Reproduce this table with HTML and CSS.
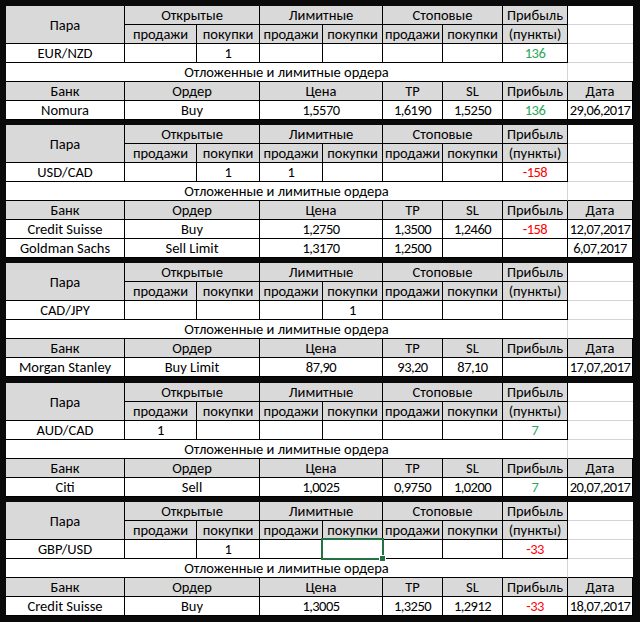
FILE: index.html
```html
<!DOCTYPE html>
<html lang="ru">
<head>
<meta charset="utf-8">
<title>Ордера</title>
<link rel="stylesheet" href="styles.css">
</head>
<body>
<div class="sheet">

  <section class="block">
    <div class="c h r2">Пара</div>
    <div class="c h s2">Открытые</div>
    <div class="c h s2">Лимитные</div>
    <div class="c h s2">Стоповые</div>
    <div class="c h">Прибыль</div>
    <div class="c g"></div>
    <div class="c h">продажи</div><div class="c h">покупки</div>
    <div class="c h">продажи</div><div class="c h">покупки</div>
    <div class="c h">продажи</div><div class="c h">покупки</div>
    <div class="c h">(пункты)</div>
    <div class="c g"></div>
    <div class="c">EUR/NZD</div><div class="c"></div><div class="c n">1</div><div class="c"></div><div class="c"></div><div class="c"></div><div class="c"></div><div class="c n pos">136</div>
    <div class="c g"></div>
    <div class="c cap">Отложенные и лимитные ордера</div>
    <div class="c g gk"></div>
    <div class="c h">Банк</div><div class="c h s2">Ордер</div><div class="c h s2">Цена</div><div class="c h">TP</div><div class="c h">SL</div><div class="c h">Прибыль</div><div class="c h">Дата</div>
    <div class="c">Nomura</div><div class="c s2">Buy</div><div class="c n s2">1,5570</div><div class="c n">1,6190</div><div class="c n">1,5250</div><div class="c n pos">136</div><div class="c n">29,06,2017</div>
  </section>

  <section class="block">
    <div class="c h r2">Пара</div>
    <div class="c h s2">Открытые</div>
    <div class="c h s2">Лимитные</div>
    <div class="c h s2">Стоповые</div>
    <div class="c h">Прибыль</div>
    <div class="c g"></div>
    <div class="c h">продажи</div><div class="c h">покупки</div>
    <div class="c h">продажи</div><div class="c h">покупки</div>
    <div class="c h">продажи</div><div class="c h">покупки</div>
    <div class="c h">(пункты)</div>
    <div class="c g"></div>
    <div class="c">USD/CAD</div><div class="c"></div><div class="c n">1</div><div class="c n">1</div><div class="c"></div><div class="c"></div><div class="c"></div><div class="c n neg">-158</div>
    <div class="c g"></div>
    <div class="c cap">Отложенные и лимитные ордера</div>
    <div class="c g gk"></div>
    <div class="c h">Банк</div><div class="c h s2">Ордер</div><div class="c h s2">Цена</div><div class="c h">TP</div><div class="c h">SL</div><div class="c h">Прибыль</div><div class="c h">Дата</div>
    <div class="c">Credit Suisse</div><div class="c s2">Buy</div><div class="c n s2">1,2750</div><div class="c n">1,3500</div><div class="c n">1,2460</div><div class="c n neg">-158</div><div class="c n">12,07,2017</div>
    <div class="c">Goldman Sachs</div><div class="c s2">Sell Limit</div><div class="c n s2">1,3170</div><div class="c n">1,2500</div><div class="c"></div><div class="c"></div><div class="c n">6,07,2017</div>
  </section>

  <section class="block">
    <div class="c h r2">Пара</div>
    <div class="c h s2">Открытые</div>
    <div class="c h s2">Лимитные</div>
    <div class="c h s2">Стоповые</div>
    <div class="c h">Прибыль</div>
    <div class="c g"></div>
    <div class="c h">продажи</div><div class="c h">покупки</div>
    <div class="c h">продажи</div><div class="c h">покупки</div>
    <div class="c h">продажи</div><div class="c h">покупки</div>
    <div class="c h">(пункты)</div>
    <div class="c g"></div>
    <div class="c">CAD/JPY</div><div class="c"></div><div class="c"></div><div class="c"></div><div class="c n">1</div><div class="c"></div><div class="c"></div><div class="c"></div>
    <div class="c g"></div>
    <div class="c cap">Отложенные и лимитные ордера</div>
    <div class="c g gk"></div>
    <div class="c h">Банк</div><div class="c h s2">Ордер</div><div class="c h s2">Цена</div><div class="c h">TP</div><div class="c h">SL</div><div class="c h">Прибыль</div><div class="c h">Дата</div>
    <div class="c">Morgan Stanley</div><div class="c s2">Buy Limit</div><div class="c n s2">87,90</div><div class="c n">93,20</div><div class="c n">87,10</div><div class="c"></div><div class="c n">17,07,2017</div>
  </section>

  <section class="block wide-gap">
    <div class="c h r2">Пара</div>
    <div class="c h s2">Открытые</div>
    <div class="c h s2">Лимитные</div>
    <div class="c h s2">Стоповые</div>
    <div class="c h">Прибыль</div>
    <div class="c g"></div>
    <div class="c h">продажи</div><div class="c h">покупки</div>
    <div class="c h">продажи</div><div class="c h">покупки</div>
    <div class="c h">продажи</div><div class="c h">покупки</div>
    <div class="c h">(пункты)</div>
    <div class="c g"></div>
    <div class="c">AUD/CAD</div><div class="c n">1</div><div class="c"></div><div class="c"></div><div class="c"></div><div class="c"></div><div class="c"></div><div class="c n pos">7</div>
    <div class="c g"></div>
    <div class="c cap">Отложенные и лимитные ордера</div>
    <div class="c g gk"></div>
    <div class="c h">Банк</div><div class="c h s2">Ордер</div><div class="c h s2">Цена</div><div class="c h">TP</div><div class="c h">SL</div><div class="c h">Прибыль</div><div class="c h">Дата</div>
    <div class="c">Citi</div><div class="c s2">Sell</div><div class="c n s2">1,0025</div><div class="c n">0,9750</div><div class="c n">1,0200</div><div class="c n pos">7</div><div class="c n">20,07,2017</div>
  </section>

  <section class="block">
    <div class="c h r2">Пара</div>
    <div class="c h s2">Открытые</div>
    <div class="c h s2">Лимитные</div>
    <div class="c h s2">Стоповые</div>
    <div class="c h">Прибыль</div>
    <div class="c g"></div>
    <div class="c h">продажи</div><div class="c h">покупки</div>
    <div class="c h">продажи</div><div class="c h">покупки</div>
    <div class="c h">продажи</div><div class="c h">покупки</div>
    <div class="c h">(пункты)</div>
    <div class="c g"></div>
    <div class="c">GBP/USD</div><div class="c"></div><div class="c n">1</div><div class="c"></div><div class="c selected"></div><div class="c"></div><div class="c"></div><div class="c n neg">-33</div>
    <div class="c g"></div>
    <div class="c cap">Отложенные и лимитные ордера</div>
    <div class="c g gk"></div>
    <div class="c h">Банк</div><div class="c h s2">Ордер</div><div class="c h s2">Цена</div><div class="c h">TP</div><div class="c h">SL</div><div class="c h">Прибыль</div><div class="c h">Дата</div>
    <div class="c">Credit Suisse</div><div class="c s2">Buy</div><div class="c n s2">1,3005</div><div class="c n">1,3250</div><div class="c n">1,2912</div><div class="c n neg">-33</div><div class="c n">18,07,2017</div>
  </section>

</div>
</body>
</html>
```

FILE: styles.css
```css
html, body {
  margin: 0;
  padding: 0;
  background: #0a0a0a;
}

body {
  width: 640px;
  height: 622px;
  overflow: hidden;
}

.sheet {
  display: flex;
  flex-direction: column;
  gap: 5px;
  padding: 6px 7px 0 6px;
}

.block {
  display: grid;
  grid-template-columns: 119px 72px 63px 63px 60px 60px 60px 65px 65px;
  grid-auto-rows: 19px;
  background: #fff;
}

.wide-gap {
  margin-top: 1px;
}

.c {
  box-sizing: border-box;
  display: flex;
  align-items: center;
  justify-content: center;
  border-right: 1px solid #000;
  border-bottom: 1px solid #000;
  background: #fff;
  color: #000;
  font-family: Carlito, "Open Sans", "Liberation Sans", sans-serif;
  font-size: 14.5px;
  line-height: 1;
  white-space: nowrap;
  padding-top: 1px;
}

.n {
  letter-spacing: -0.55px;
}

.h {
  background: #d9d9d9;
}

.r2 {
  grid-row: span 2;
}

.s2 {
  grid-column: span 2;
}

.cap {
  grid-column: span 8;
  border-right-color: #d4d4d4;
}

.g {
  border-right: none;
  border-bottom-color: #d4d4d4;
}

.gk {
  border-bottom-color: #000;
}

.pos {
  color: #27a85a;
}

.neg {
  color: #ff0000;
}

.selected {
  position: relative;
}

.selected::after {
  content: "";
  position: absolute;
  left: -2px;
  top: -2px;
  right: -2px;
  bottom: -2px;
  border: 2px solid #217346;
}

.selected::before {
  content: "";
  position: absolute;
  right: -4px;
  bottom: -4px;
  width: 5px;
  height: 5px;
  background: #217346;
  border: 1px solid #fff;
  z-index: 1;
}
```
